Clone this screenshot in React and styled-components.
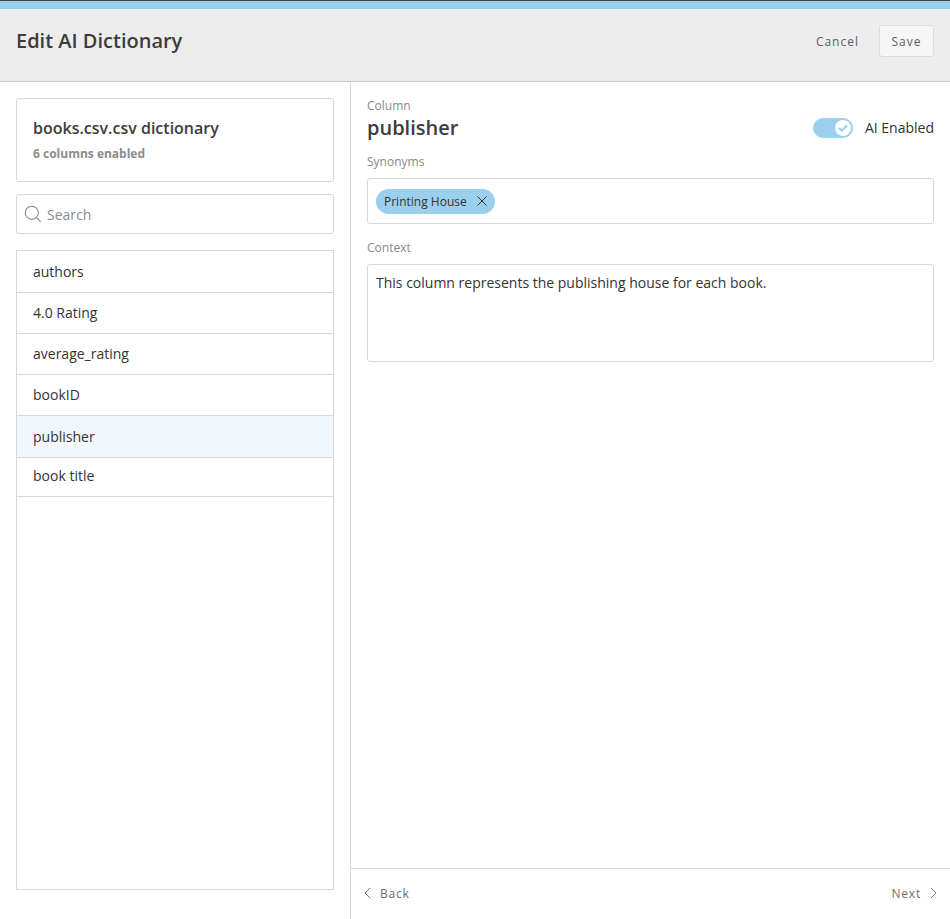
import React from "react";
import styled, { createGlobalStyle } from "styled-components";

const Global = createGlobalStyle`
  html, body { margin: 0; padding: 0; background: #fff; }
  body { font-family: "Open Sans", "Noto Sans", sans-serif; color: #333; }
  * { box-sizing: border-box; }
`;

const Page = styled.div`
  width: 950px;
  height: 919px;
  display: flex;
  flex-direction: column;
  overflow: hidden;
  border-top: 1px solid #444;
`;

const Header = styled.header`
  height: 81px;
  flex: none;
  background: #ededed;
  border-top: 8px solid #9bcfee;
  border-bottom: 1px solid #c8c8c8;
  display: flex;
  align-items: center;
  justify-content: space-between;
  padding: 0 16px 8px;
`;

const Title = styled.h1`
  margin: 0;
  font-size: 20px;
  line-height: 28px;
  font-weight: 600;
  color: #3c3c3c;
`;

const Actions = styled.div`
  display: flex;
  align-items: center;
  gap: 20px;
`;

const Cancel = styled.span`
  font-size: 12px;
  font-weight: 500;
  letter-spacing: 1px;
  color: #5e5e5e;
`;

const Save = styled.button`
  width: 55px;
  height: 32px;
  padding: 0;
  font-family: inherit;
  font-size: 12px;
  font-weight: 500;
  letter-spacing: 1px;
  color: #5e5e5e;
  background: #f6f6f6;
  border: 1px solid #ddd;
  border-radius: 3px;
`;

const Body = styled.div`
  flex: 1;
  min-height: 0;
  display: flex;
`;

const Sidebar = styled.aside`
  width: 351px;
  flex: none;
  border-right: 1px solid #d8d8d8;
  padding: 16px 16px 29px;
  display: flex;
  flex-direction: column;
`;

const InfoCard = styled.div`
  height: 84px;
  flex: none;
  border: 1px solid #d8d8d8;
  border-radius: 3px;
  padding: 18px 16px 0;
`;

const CardTitle = styled.div`
  font-size: 16px;
  line-height: 22px;
  font-weight: 600;
  color: #3c3c3c;
`;

const CardSub = styled.div`
  margin-top: 6px;
  font-size: 12px;
  line-height: 17px;
  font-weight: 700;
  color: #8c8c8c;
`;

const SearchBox = styled.div`
  height: 40px;
  flex: none;
  margin-top: 12px;
  border: 1px solid #d8d8d8;
  border-radius: 3px;
  display: flex;
  align-items: center;
  gap: 5px;
  padding: 0 7px;
  font-size: 14px;
  color: #8a8a8a;
`;

const List = styled.ul`
  flex: 1;
  margin: 16px 0 0;
  padding: 0;
  list-style: none;
  border: 1px solid #d8d8d8;
`;

const Row = styled.li`
  height: ${(p) => p.$h}px;
  display: flex;
  align-items: center;
  padding: 0 0 ${(p) => p.$pb || 0}px 16px;
  font-size: 14px;
  color: #333;
  background: ${(p) => (p.$active ? "#f2f7fb" : "#fff")};
  border-bottom: 1px solid #d8d8d8;
`;

const Main = styled.main`
  flex: 1;
  min-width: 0;
  display: flex;
  flex-direction: column;
`;

const Content = styled.div`
  flex: 1;
  padding: 15px 16px 0;
`;

const Label = styled.div`
  font-size: 12px;
  line-height: 17px;
  color: #888;
`;

const ColumnRow = styled.div`
  display: flex;
  align-items: center;
  justify-content: space-between;
  height: 28px;
`;

const ColumnName = styled.div`
  font-size: 20px;
  line-height: 28px;
  font-weight: 600;
  color: #3c3c3c;
`;

const ToggleWrap = styled.div`
  display: flex;
  align-items: center;
  gap: 12px;
  font-size: 14px;
  color: #333;
`;

const ToggleText = styled.span`
  padding-bottom: 2px;
`;

const Toggle = styled.div`
  width: 40px;
  height: 20px;
  border-radius: 10px;
  background: #9bcfee;
  display: flex;
  align-items: center;
  justify-content: flex-end;
  padding-right: 2px;
`;

const Knob = styled.div`
  width: 16px;
  height: 16px;
  border-radius: 50%;
  background: #fff;
  display: flex;
  align-items: center;
  justify-content: center;
`;

const SynLabel = styled(Label)`
  margin-top: 11px;
`;

const SynBox = styled.div`
  height: 46px;
  margin-top: 8px;
  border: 1px solid #d8d8d8;
  border-radius: 3px;
  display: flex;
  align-items: center;
  padding-left: 8px;
`;

const Chip = styled.div`
  height: 25px;
  border-radius: 13px;
  background: #9bcfee;
  display: flex;
  align-items: center;
  gap: 10px;
  padding: 0 8px;
  font-size: 12px;
  color: #333;
`;

const CtxLabel = styled(Label)`
  margin-top: 15px;
`;

const CtxBox = styled.div`
  height: 98px;
  margin-top: 8px;
  border: 1px solid #d8d8d8;
  border-radius: 3px;
  padding: 8px;
  font-size: 14px;
  line-height: 20px;
  color: #333;
`;

const Footer = styled.footer`
  height: 51px;
  flex: none;
  border-top: 1px solid #d8d8d8;
  display: flex;
  align-items: center;
  justify-content: space-between;
  padding: 0 12px 2px 12px;
`;

const NavLink = styled.div`
  display: flex;
  align-items: center;
  gap: 8px;
  font-size: 12px;
  font-weight: 500;
  letter-spacing: 0.8px;
  color: #6e6e6e;
`;

const rows = [
  ["authors", 42, false, 0],
  ["4.0 Rating", 41, false, 2],
  ["average_rating", 41, false, 2],
  ["bookID", 41, false, 2],
  ["publisher", 42, true, 0],
  ["book title", 39, false, 4],
];

const Chevron = ({ d }) => (
  <svg width="9" height="14" viewBox="0 0 9 14" fill="none" stroke="#777" strokeWidth="1">
    <path d={d} />
  </svg>
);

export default function App() {
  return (
    <Page>
      <Global />
      <Header>
        <Title>Edit AI Dictionary</Title>
        <Actions>
          <Cancel>Cancel</Cancel>
          <Save>Save</Save>
        </Actions>
      </Header>
      <Body>
        <Sidebar>
          <InfoCard>
            <CardTitle>books.csv.csv dictionary</CardTitle>
            <CardSub>6 columns enabled</CardSub>
          </InfoCard>
          <SearchBox>
            <svg width="18" height="18" viewBox="0 0 18 18" fill="none" stroke="#888" strokeWidth="1.1">
              <circle cx="7.8" cy="7.8" r="6.6" />
              <path d="M12.6 12.6 L16.6 16.6" />
            </svg>
            <span>Search</span>
          </SearchBox>
          <List>
            {rows.map(([name, h, active, pb]) => (
              <Row key={name} $h={h} $active={active} $pb={pb}>{name}</Row>
            ))}
          </List>
        </Sidebar>
        <Main>
          <Content>
            <Label>Column</Label>
            <ColumnRow>
              <ColumnName>publisher</ColumnName>
              <ToggleWrap>
                <Toggle>
                  <Knob>
                    <svg width="10" height="8" viewBox="0 0 10 8" fill="none" stroke="#9bcfee" strokeWidth="2">
                      <path d="M1 4 L3.8 6.6 L9 1.2" />
                    </svg>
                  </Knob>
                </Toggle>
                <ToggleText>AI Enabled</ToggleText>
              </ToggleWrap>
            </ColumnRow>
            <SynLabel>Synonyms</SynLabel>
            <SynBox>
              <Chip>
                Printing House
                <svg width="10" height="10" viewBox="0 0 10 10" fill="none" stroke="#333" strokeWidth="1">
                  <path d="M.5 .5 L9.5 9.5 M9.5 .5 L.5 9.5" />
                </svg>
              </Chip>
            </SynBox>
            <CtxLabel>Context</CtxLabel>
            <CtxBox>This column represents the publishing house for each book.</CtxBox>
          </Content>
          <Footer>
            <NavLink>
              <Chevron d="M7 2 L2 7 L7 12" />
              Back
            </NavLink>
            <NavLink>
              Next
              <Chevron d="M2 2 L7 7 L2 12" />
            </NavLink>
          </Footer>
        </Main>
      </Body>
    </Page>
  );
}
